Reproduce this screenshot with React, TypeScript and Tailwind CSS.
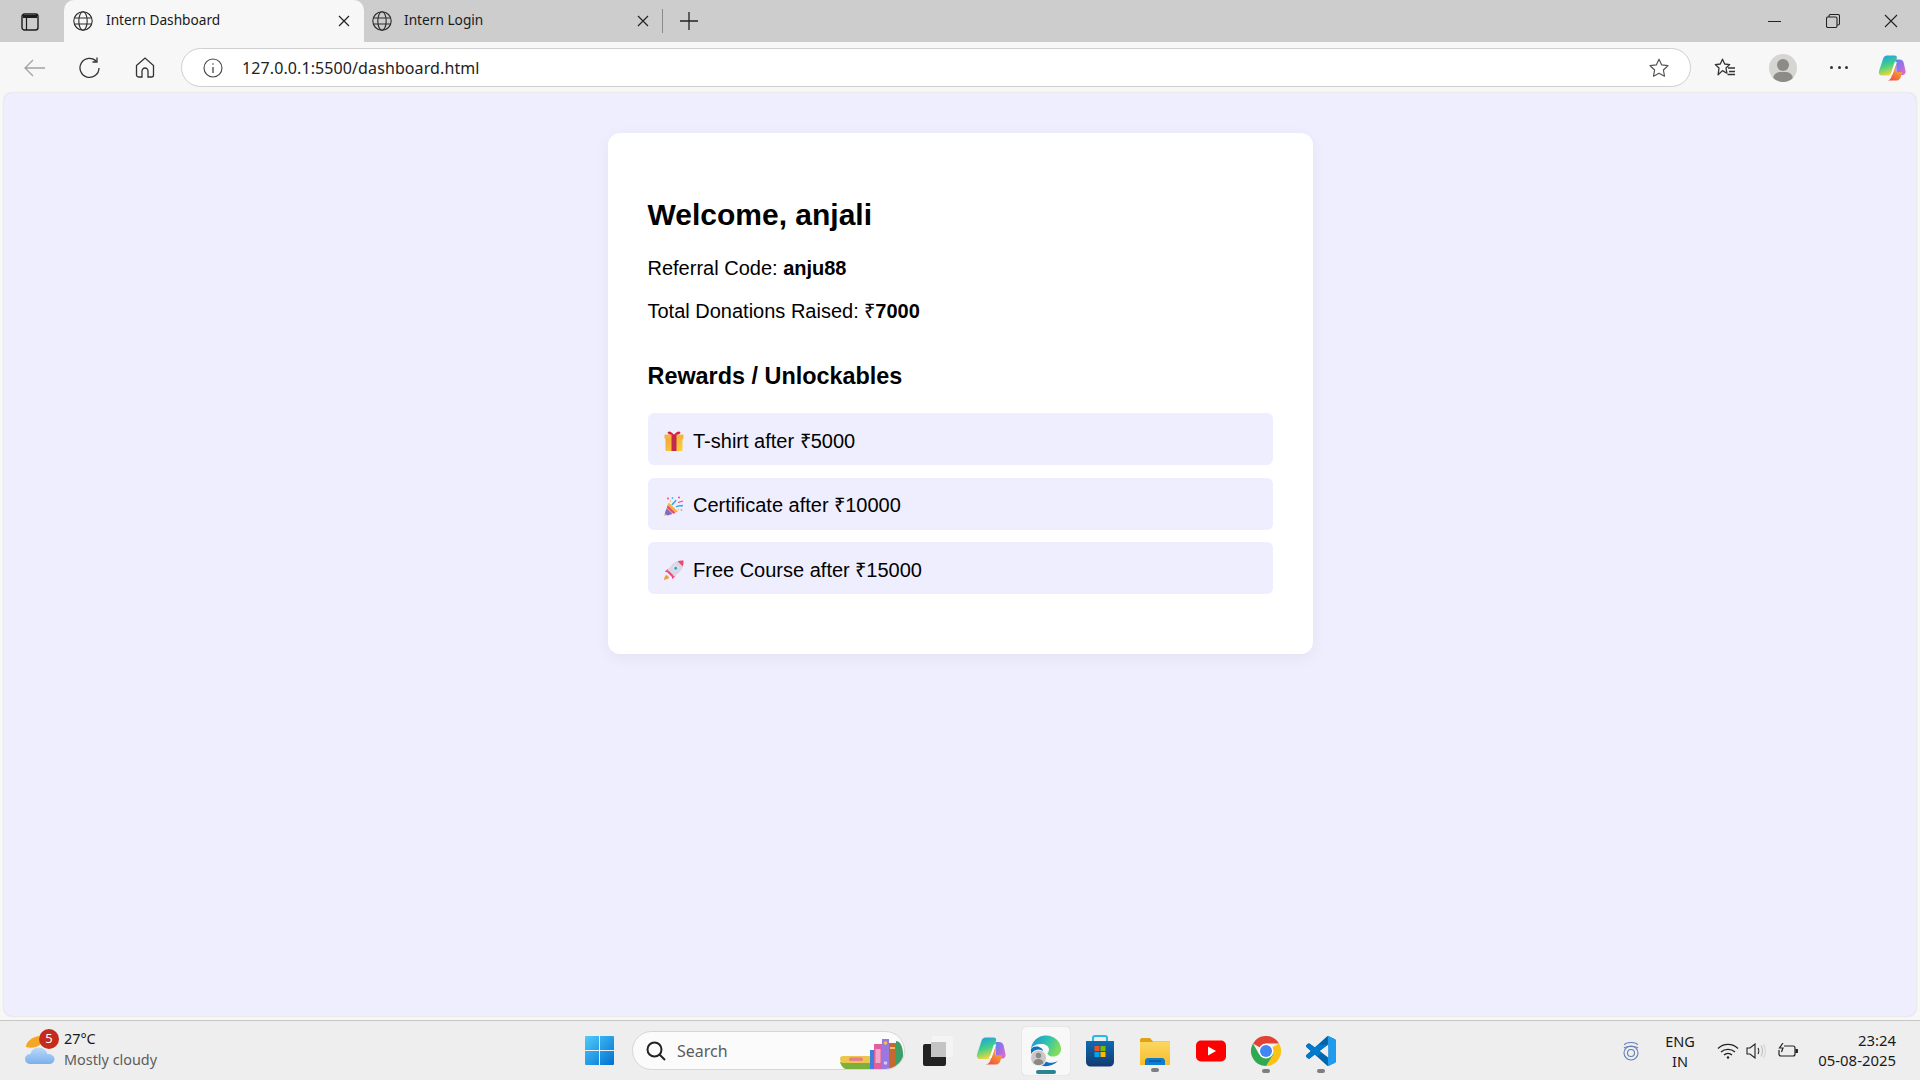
import React from "react";

const Globe = () => (
  <svg width="20" height="20" viewBox="0 0 20 20" fill="none" stroke="#2b2b2b" strokeWidth="1.1" className="shrink-0">
    <circle cx="10" cy="10" r="9.2" />
    <ellipse cx="10" cy="10" rx="4.2" ry="9.2" />
    <path d="M1.4 7h17.2M1.4 13h17.2" />
  </svg>
);

const Close = ({ s = 12 }: { s?: number }) => (
  <svg width={s} height={s} viewBox="0 0 12 12" fill="none" stroke="#222" strokeWidth="1.2" className="shrink-0">
    <path d="M1 1l10 10M11 1L1 11" />
  </svg>
);

const SidebarIcon = () => (
  <svg width="18" height="18" viewBox="0 0 18 18" fill="none" className="shrink-0">
    <rect x="1" y="1" width="16" height="16" rx="2.5" stroke="#1c1c1c" strokeWidth="1.4" />
    <path d="M2 2h14v3H2z" fill="#1c1c1c" />
    <path d="M5.5 5v12" stroke="#1c1c1c" strokeWidth="1.2" />
  </svg>
);

const Copilot = ({ s = 28, id }: { s?: number; id: string }) => (
  <svg width={s} height={s} viewBox="0 0 28 28" className="shrink-0">
    <defs>
      <linearGradient id={id + "a"} x1="0.2" y1="0" x2="0.5" y2="1">
        <stop offset="0" stopColor="#1f9fe8" />
        <stop offset="0.5" stopColor="#3fcf8a" />
        <stop offset="1" stopColor="#f5d83a" />
      </linearGradient>
      <linearGradient id={id + "b"} x1="0" y1="0" x2="1" y2="1">
        <stop offset="0" stopColor="#4f8cf0" />
        <stop offset="0.5" stopColor="#a96ce6" />
        <stop offset="1" stopColor="#e86fc0" />
      </linearGradient>
      <linearGradient id={id + "c"} x1="0.2" y1="1" x2="0.8" y2="0">
        <stop offset="0" stopColor="#ef4f3f" />
        <stop offset="0.6" stopColor="#f59a3a" />
        <stop offset="1" stopColor="#e86fc0" />
      </linearGradient>
    </defs>
    <path d="M9 1.500h7.500c2 0 2.800 1.300 2.200 3L14 19c-.5 1.500-1.500 2.500-3.200 2.500H4C1.500 21.500 .3 19.500 1 17L5 5c.7-2.300 2-3.500 4-3.500z" fill={`url(#${id}a)`} />
    <path d="M18 5.500h3.500c2.300 0 3.500 1 4.200 3.200l1.800 8c.5 2.300-.8 4.300-3 4.300h-6z" fill={`url(#${id}b)`} />
    <path d="M18.500 8 13.500 22.500C12.700 25 11.300 26.500 9 26.500h9.500c2.200 0 3.500-1.200 4.200-3.200L24.500 18H20c-2 0-2.500-1-2-2.500z" fill={`url(#${id}c)`} />
    <path d="M17.500 8 18.800 8 14.500 20.500H10.800C12.500 20.500 13 19.500 13.500 18L16 10c.3-1.200.8-2 1.500-2z" fill="#fff" />
  </svg>
);

const Gift = () => (
  <svg width="20" height="20" viewBox="0 0 20 20" className="shrink-0">
    <defs>
      <linearGradient id="gf" x1="0" y1="0" x2="1" y2="1">
        <stop offset="0" stopColor="#f3a33a" />
        <stop offset="1" stopColor="#fbd33b" />
      </linearGradient>
    </defs>
    <rect x="1.500" y="6" width="17" height="14" rx="1" fill="url(#gf)" />
    <rect x="0.500" y="3.500" width="19" height="4.500" rx="1" fill="#f6b53a" />
    <rect x="7.500" y="3.500" width="5" height="16.500" fill="#c4284b" />
    <path d="M10 4C8 .6 5 -.4 3.800 1 3 2.400 5 4 10 4zM10 4c2-3.400 5-4.400 6.200-3 .8 1.400-1.200 3-6.200 3z" fill="#d8203c" />
  </svg>
);

const Party = () => (
  <svg width="20" height="20" viewBox="0 0 20 20" className="shrink-0">
    <path d="M0 20 4.600 6.500 14 15.500z" fill="#f5b13c" />
    <path d="M0.800 17.600 2.600 12.400 8.400 18 3.500 19.500z" fill="#7a6bd0" />
    <path d="M3.600 9.500 11.500 17 9.600 17.800 2.900 11.500z" fill="#e0457b" />
    <path d="M8 9c1-2 3-2.500 4-5" stroke="#2ba6ee" strokeWidth="1.500" fill="none" />
    <path d="M12 11c2-1.500 4-1 7-1.500" stroke="#2ba6ee" strokeWidth="1.500" fill="none" />
    <circle cx="4" cy="2.500" r="1" fill="#f4468f" />
    <circle cx="15" cy="1.500" r="1" fill="#f4468f" />
    <circle cx="8.500" cy="2" r="0.900" fill="#35c0e8" />
    <circle cx="17.500" cy="14" r="0.900" fill="#f5a03c" />
    <path d="M14 6.500l5-1.500" stroke="#f4468f" strokeWidth="1.300" />
    <circle cx="14.500" cy="13.500" r="0.700" fill="#f0c53c" />
    <circle cx="6.500" cy="5" r="0.700" fill="#f5a03c" />
  </svg>
);

const Rocket = () => (
  <svg width="20" height="20" viewBox="0 0 20 20" className="shrink-0">
    <path d="M0 20c.3-2.500 1-4.200 2.400-5.200l2.800 2.800C4.200 19 2.500 19.700 0 20z" fill="#f79a34" />
    <path d="M4.500 8.500 0.800 11.500 4 12.500zM11.500 15.500 8.500 19.200 7.500 16z" fill="#f2447a" />
    <path d="M19.500 .5c.4 4.500-1.200 8.800-4.200 11.700l-5.500 4.300-6.300-6.300 4.300-5.500C10.700 1.700 15 .1 19.500 .5z" fill="#d9d7e0" />
    <path d="M19.500 .5c.2 2-.1 4-.8 5.900L13.600 1.300c1.900-.7 3.900-1 5.900-.8z" fill="#f2447a" />
    <circle cx="11.800" cy="8.200" r="2.200" fill="#4a9fe0" stroke="#f4f4f8" />
    <path d="M4.500 10.500 9.500 15.500 7.500 16.500 3.500 12.500z" fill="#f2447a" />
  </svg>
);

const Reward = ({ icon, text }: { icon: React.ReactNode; text: string }) => (
  <li className="flex h-[52px] items-center gap-[9.500px] rounded-[6px] bg-[#eeeeff] pl-4 pt-1 text-[20px] leading-[23px]">
    {icon}
    <span>{text}</span>
  </li>
);

const Books = () => (
  <svg width="64" height="32" viewBox="0 0 64 32" className="shrink-0">
    <path d="M0 24h30v8H10C4 32 1 28 0 24z" fill="#7bb03c" />
    <path d="M0 20c0-1 1-2 3-2h27v7H3c-2 0-3-2-3-5z" fill="#ecc64a" />
    <rect x="9" y="19.500" width="14" height="3.500" rx="1.500" fill="#e6808f" />
    <rect x="30" y="12" width="4" height="20" fill="#3f7fdc" />
    <rect x="34" y="6" width="8" height="26" fill="#e05fa0" />
    <rect x="35.500" y="11" width="5" height="14" fill="#f4a6c8" />
    <rect x="42" y="1" width="7" height="31" fill="#9a78e0" />
    <circle cx="45.500" cy="5" r="1.800" fill="#f0c53c" />
    <circle cx="45.500" cy="25" r="1.800" fill="#d8c8f8" />
    <rect x="49" y="5" width="7" height="27" fill="#c56a2c" />
    <rect x="50" y="9" width="5" height="2" fill="#f0c070" />
    <path d="M56 3c4 0 7 5 7 14s-2 13-7 15z" fill="#3d9e68" />
  </svg>
);

const EdgeLogo = () => (
  <svg width="32" height="32" viewBox="0 0 32 32" className="shrink-0">
    <defs>
      <linearGradient id="ed1" x1="0" y1="0" x2="1" y2="0.400">
        <stop offset="0" stopColor="#1d8fd8" />
        <stop offset="0.550" stopColor="#2ec2b2" />
        <stop offset="1" stopColor="#7fdc5e" />
      </linearGradient>
    </defs>
    <path d="M1 14C2 6 8 .5 16 .5c9 0 15 6.500 15 13.500 0 5-4 7.500-8 7.500-3 0-5.500-1.500-5.500-3 0-.8 1.500-1.500 1.500-4 0-3-3-5.500-7-5.500C6 9 2 11 1 14z" fill="url(#ed1)" />
    <path d="M1 14c-.6 7 3 13 9 16 6 2.500 13 1 18-4-4 2-9 2.500-12 .5-4-2.500-5-7.500-3-11-1-4-9-6-12-1.500z" fill="#0f6fc0" />
    <circle cx="8.500" cy="23" r="8" fill="#c9c8c5" stroke="#f7f7f7" strokeWidth="1" />
    <circle cx="8.500" cy="20.500" r="2.700" fill="#8b8985" />
    <path d="M3.500 28c.5-3 2.500-4 5-4s4.500 1 5 4c-1.500 1.600-3 2-5 2s-3.500-.4-5-2z" fill="#8b8985" />
  </svg>
);

const Store = () => (
  <svg width="30" height="32" viewBox="0 0 30 32" className="shrink-0">
    <defs>
      <linearGradient id="st" x1="0" y1="0" x2="0" y2="1">
        <stop offset="0" stopColor="#0f6cb0" />
        <stop offset="1" stopColor="#123a70" />
      </linearGradient>
    </defs>
    <path d="M8 6V3c0-1 .8-2 2-2h10c1.200 0 2 1 2 2v3" stroke="#29b6e8" strokeWidth="2" fill="none" />
    <path d="M1 6h28v21c0 2.500-2 4.500-4.500 4.500h-19C3 31.500 1 29.500 1 27z" fill="url(#st)" />
    <rect x="9.500" y="11" width="5" height="5" fill="#f25022" />
    <rect x="15.500" y="11" width="5" height="5" fill="#7fba00" />
    <rect x="9.500" y="17" width="5" height="5" fill="#00a4ef" />
    <rect x="15.500" y="17" width="5" height="5" fill="#ffb900" />
  </svg>
);

const Folder = () => (
  <svg width="30" height="28" viewBox="0 0 30 28" className="shrink-0">
    <defs>
      <linearGradient id="fo" x1="0" y1="0" x2="0" y2="1">
        <stop offset="0" stopColor="#fbd760" />
        <stop offset="1" stopColor="#f8bd2c" />
      </linearGradient>
    </defs>
    <path d="M0 3c0-1 .7-2 2-2h8l3 3.500h17V9H0z" fill="#e3a20d" />
    <rect x="0" y="5" width="30" height="23" fill="url(#fo)" />
    <path d="M5 28v-4c0-1.500 1-3 3-3h14c2 0 3 1.500 3 3v4z" fill="#0f7cd0" />
    <rect x="9" y="23.500" width="12" height="1.200" fill="#0a4f8e" />
  </svg>
);

const YouTube = () => (
  <svg width="30" height="22" viewBox="0 0 30 22" className="shrink-0">
    <rect width="30" height="21" y="0.500" rx="5" fill="#fe0000" />
    <path d="M12 6.500v9l8-4.500z" fill="#fff" />
  </svg>
);

const Chrome = () => (
  <svg width="30" height="30" viewBox="0 0 30 30" className="shrink-0">
    <path d="M15 15 2 7.500A15 15 0 0 1 28 7.500H15z" fill="#e34133" />
    <path d="M15 15 28 7.500A15 15 0 0 1 15 30l7-12z" fill="#fbc116" />
    <path d="M15 15l7.500 3L15 30A15 15 0 0 1 2 7.500L8 18z" fill="#31a852" />
    <circle cx="15" cy="15" r="7.500" fill="#fff" />
    <circle cx="15" cy="15" r="6" fill="#4285f4" />
  </svg>
);

const VSCode = () => (
  <svg width="30" height="30" viewBox="0 0 24 24" className="shrink-0">
    <defs>
      <clipPath id="vc">
        <path d="M23.150 2.587L18.210.21a1.494 1.494 0 0 0-1.705.29l-9.460 8.630-4.120-3.128a.999.999 0 0 0-1.276.057L.327 7.261A1 1 0 0 0 .326 8.740L3.899 12 .326 15.260a1 1 0 0 0 .001 1.479L1.650 17.940a.999.999 0 0 0 1.276.057l4.120-3.128 9.460 8.630a1.492 1.492 0 0 0 1.704.29l4.942-2.377A1.500 1.500 0 0 0 24 20.060V3.939a1.500 1.500 0 0 0-.85-1.352zm-5.146 14.861L10.826 12l7.178-5.448v10.896z" />
      </clipPath>
    </defs>
    <g clipPath="url(#vc)">
      <rect width="24" height="24" fill="#0065a9" />
      <path d="M0 7h18v3L4 20H0z" fill="#007acc" />
      <rect x="17.500" width="7" height="24" fill="#1f9cf0" />
    </g>
  </svg>
);

const Dot = ({ w = 8, c = "#7e7e7e" }: { w?: number; c?: string }) => (
  <span className="absolute bottom-[-7px] left-1/2 h-[4px] -translate-x-1/2 rounded-full" style={{ width: w, background: c }} />
);

export default function App() {
  return (
    <div className="flex h-[1080px] w-[1920px] flex-col overflow-hidden bg-[#f7f7f7] font-['Noto_Sans','Open_Sans',sans-serif] text-[#1a1a1a]">
      {/* tab strip */}
      <div className="flex h-[42px] shrink-0 items-center bg-[#cdcdcd]">
        <div className="flex w-[64px] justify-center pr-1 pt-[1px]"><SidebarIcon /></div>
        <div className="flex h-[42px] w-[300px] items-center rounded-t-[10px] bg-[#f7f7f7] pl-[9px] pr-[14px]">
          <Globe />
          <span className="ml-[13px] -mt-[1px] flex-1 text-[13.700px]">Intern Dashboard</span>
          <Close />
        </div>
        <div className="flex h-[42px] w-[298px] items-center pl-[8px] pr-[13px]">
          <Globe />
          <span className="ml-[12px] -mt-[1px] flex-1 text-[13.700px]">Intern Login</span>
          <Close />
        </div>
        <div className="h-[24px] w-px bg-[#8a8a8a]" />
        <svg width="18" height="18" viewBox="0 0 18 18" stroke="#222" strokeWidth="1.300" className="ml-[17px]"><path d="M9 0v18M0 9h18" /></svg>
        <div className="flex-1" />
        <div className="flex w-[174px] items-center justify-between pl-[22px] pr-[22px]">
          <div className="h-[1px] w-[13px] bg-[#222]" />
          <svg width="14" height="14" viewBox="0 0 14 14" fill="none" stroke="#222" strokeWidth="1.100"><rect x="0.500" y="3" width="10.500" height="10.500" rx="1.500" /><path d="M3 3V2c0-.8.7-1.500 1.500-1.500H12c.8 0 1.500.7 1.500 1.500v7.500c0 .8-.7 1.500-1.500 1.500h-1" /></svg>
          <svg width="14" height="14" viewBox="0 0 14 14" stroke="#222" strokeWidth="1.100"><path d="M1 1l12 12M13 1L1 13" /></svg>
        </div>
      </div>

      {/* toolbar */}
      <div className="flex h-[51px] shrink-0 items-center bg-[#f7f7f7]">
        <svg width="22" height="18" viewBox="0 0 22 18" fill="none" stroke="#a3a3a3" strokeWidth="1.300" className="ml-[24px]"><path d="M21 9H1M9 1 1 9l8 8" /></svg>
        <svg width="22" height="22" viewBox="0 0 22 22" fill="none" stroke="#333" strokeWidth="1.300" className="ml-[33px]"><path d="M17.500 4.500A9.500 9.500 0 1 0 20 11" /><path d="M18 0.500V5h-4.500" /></svg>
        <svg width="20" height="21" viewBox="0 0 20 21" fill="none" stroke="#333" strokeWidth="1.300" className="ml-[34px]"><path d="M1.500 8.500 10 1l8.500 7.500V18c0 1-.8 2-2 2H13v-6c0-1.500-1.300-3-3-3s-3 1.500-3 3v6H3.500c-1.200 0-2-1-2-2z" /></svg>
        <div className="ml-[26px] flex h-[39px] w-[1510px] items-center rounded-full border border-[#cfcfcf] bg-white pl-[21px] pr-[21px]">
          <svg width="20" height="20" viewBox="0 0 20 20" fill="none" stroke="#444" strokeWidth="1.100"><circle cx="10" cy="10" r="9" /><path d="M10 9v6" strokeWidth="1.300" /><circle cx="10" cy="6" r="0.800" fill="#444" stroke="none" /></svg>
          <span className="ml-[19px] flex-1 text-[16px] tracking-[0.1px] text-[#222]">127.0.0.1:5500/dashboard.html</span>
          <svg width="20" height="20" viewBox="0 0 20 20" fill="none" stroke="#555" strokeWidth="1.200"><path d="M10 1.200l2.700 5.700 6.200.8-4.500 4.300 1.100 6.200L10 15.200 4.500 18.200l1.100-6.200L1.100 7.700l6.200-.8z" strokeLinejoin="round" /></svg>
        </div>
        <svg width="21" height="20" viewBox="0 0 21 20" fill="none" stroke="#333" strokeWidth="1.300" className="ml-[23px]"><path d="M8.500 1.200l2.200 4.800 5 .6-3.700 3.400.9 5.200-4.400-2.600-4.400 4.200.9-6.800L1.300 6.600l5-.6z" strokeLinejoin="round" /><path d="M14 10h7M15 13.500h6M13.500 16.500h7.500" /></svg>
        <div className="relative ml-[34px] h-[28px] w-[28px] overflow-hidden rounded-full bg-[#d6d5d2]">
          <span className="absolute left-[8px] top-[5px] h-[12px] w-[12px] rounded-full bg-[#8d8b87]" />
          <span className="absolute left-[4px] top-[18px] h-[14px] w-[20px] rounded-full bg-[#8d8b87]" />
        </div>
        <div className="ml-[33px] flex w-[18px] justify-between">
          <span className="h-[3px] w-[3px] rounded-full bg-[#333]" />
          <span className="h-[3px] w-[3px] rounded-full bg-[#333]" />
          <span className="h-[3px] w-[3px] rounded-full bg-[#333]" />
        </div>
        <div className="ml-[30px]"><Copilot id="cp1" /></div>
      </div>

      {/* page */}
      <main className="mx-[4px] flex h-[923px] shrink-0 justify-center rounded-[8px] bg-[#eeeeff] font-['Liberation_Sans',Arial,sans-serif] text-black shadow-[0_0_2px_rgba(0,0,0,0.2)]">
        <section className="mt-[40px] h-[521px] w-[705px] rounded-[12px] bg-white px-[40px] pt-[65px] shadow-[0_4px_16px_rgba(0,0,0,0.05)]">
          <h1 className="text-[30px] font-bold leading-[34px]">Welcome, anjali</h1>
          <p className="mt-[25px] text-[20px] leading-[23px]">Referral Code: <b>anju88</b></p>
          <p className="mt-[20px] text-[20px] leading-[23px]">Total Donations Raised: ₹<b>7000</b></p>
          <h2 className="mt-[40px] text-[23.4px] font-bold leading-[27px]">Rewards / Unlockables</h2>
          <ul className="mt-[23px] flex flex-col gap-[12.5px]">
            <Reward icon={<Gift />} text="T-shirt after ₹5000" />
            <Reward icon={<Party />} text="Certificate after ₹10000" />
            <Reward icon={<Rocket />} text="Free Course after ₹15000" />
          </ul>
        </section>
      </main>

      {/* taskbar */}
      <footer className="mt-[4px] flex h-[60px] shrink-0 items-center border-t border-[#c6c6c6] bg-[#eeeeee]">
        <div className="relative ml-[25px] h-[36px] w-[30px] shrink-0">
          <svg width="30" height="34" viewBox="0 0 30 34" className="absolute left-0 top-0">
            <defs>
              <linearGradient id="cl" x1="0" y1="0" x2="0" y2="1"><stop offset="0" stopColor="#bcd9f8" /><stop offset="1" stopColor="#7bb0ee" /></linearGradient>
            </defs>
            <path d="M14 3C8 4 1 8 1 14c5 2 12 0 15-3z" fill="#f5a623" />
            <path d="M6 31c-3.500 0-6-2-6-5 0-3 2.500-5 5.500-5 1-4 4-6.500 8-6.500 4.500 0 8 3 9 6.500 4 0 7 2 7 5 0 3-2.500 5-5.500 5z" fill="url(#cl)" />
          </svg>
          <span className="absolute left-[14px] top-[-4px] flex h-[20px] w-[20px] items-center justify-center rounded-full bg-[#c42b1c] text-[13px] leading-none text-white">5</span>
        </div>
        <div className="ml-[9px] -mt-[2px] w-[120px] shrink-0 text-[14.400px] leading-[20.500px]">
          <div className="text-[#1a1a1a]">27°C</div>
          <div className="text-[#5c5c5c]">Mostly cloudy</div>
        </div>
        <svg width="29" height="29" viewBox="0 0 29 29" className="ml-[401px] shrink-0">
          <defs>
            <linearGradient id="wn" x1="0" y1="0" x2="1" y2="1"><stop offset="0" stopColor="#4fcbfb" /><stop offset="1" stopColor="#0070d0" /></linearGradient>
          </defs>
          <path d="M0 1a1 1 0 0 1 1-1h13v14H0zM15 0h13a1 1 0 0 1 1 1v13H15zM0 15h14v14H1a1 1 0 0 1-1-1zM15 15h14v13a1 1 0 0 1-1 1H15z" fill="url(#wn)" />
        </svg>
        <div className="ml-[18px] flex h-[39px] w-[273px] shrink-0 items-center overflow-hidden rounded-full border border-[#d6d6d6] bg-[#fbfbfb] pl-[13px]">
          <svg width="20" height="20" viewBox="0 0 20 20" fill="none" stroke="#222" strokeWidth="2" className="shrink-0"><circle cx="8.500" cy="8.500" r="7" /><path d="M13.500 13.500 19 19" /></svg>
          <span className="ml-[11px] flex-1 text-[16px] text-[#5c5c5c]">Search</span>
          <div className="mt-[6px] self-center"><Books /></div>
        </div>
        <svg width="30" height="30" viewBox="0 0 30 30" className="ml-[18px] shrink-0">
          <rect x="9" y="0" width="21" height="21" rx="2" fill="#f4f4f4" />
          <rect x="8" y="6" width="15" height="15" rx="1" fill="#c4c4c4" />
          <path d="M2 8h6v13h15v7a2 2 0 0 1-2 2H2a2 2 0 0 1-2-2V10a2 2 0 0 1 2-2z" fill="#222" />
        </svg>
        <div className="ml-[23px]"><Copilot s={30} id="cp2" /></div>
        <div className="relative ml-[16px] flex h-[48px] w-[48px] shrink-0 items-center justify-center rounded-[4px] bg-[#f8f8f8] shadow-[0_0_1px_rgba(0,0,0,0.25)]">
          <EdgeLogo />
          <span className="absolute bottom-[1px] left-1/2 h-[4px] w-[20px] -translate-x-1/2 rounded-full bg-[#2a8491]" />
        </div>
        <div className="ml-[15px]"><Store /></div>
        <div className="relative ml-[25px]"><Folder /><Dot /></div>
        <div className="ml-[26px]"><YouTube /></div>
        <div className="relative ml-[25px]"><Chrome /><Dot /></div>
        <div className="relative ml-[25px]"><VSCode /><Dot /></div>
        <div className="flex-1" />
        <svg width="16" height="20" viewBox="0 0 16 20" fill="none" stroke="#5f7fb5" strokeWidth="1.100" className="shrink-0"><path d="M1.500 4c1-3.300 12-3.300 13 0" /><circle cx="8" cy="12" r="7" /><circle cx="8" cy="12" r="3.500" /><path d="M1 7c2-2 12-2 14 0" /></svg>
        <div className="ml-[25px] w-[32px] text-center text-[14.500px] leading-[20px]"><div>ENG</div><div>IN</div></div>
        <svg width="22" height="16" viewBox="0 0 22 16" fill="none" stroke="#222" strokeWidth="1.300" className="ml-[21px]"><path d="M1 5.500c5.500-5.500 14.500-5.500 20 0M4 9c3.800-3.500 10.200-3.500 14 0M7 12c2.300-2 5.700-2 8 0" /><circle cx="11" cy="14.500" r="1.200" fill="#222" stroke="none" /></svg>
        <svg width="20" height="16" viewBox="0 0 20 16" fill="none" stroke="#222" strokeWidth="1.100" className="ml-[7px]"><path d="M1 5h3l5-4v14l-5-4H1z" /><path d="M12 5c1 1.500 1 4.500 0 6" /><path d="M15 2.500c2 3 2 8 0 11" stroke="#bdbdbd" /><path d="M17.500 1c2.500 4 2.500 10 0 14" stroke="#d4d4d4" /></svg>
        <svg width="20" height="16" viewBox="0 0 20 16" fill="none" stroke="#222" strokeWidth="1.200" className="ml-[12px]"><path d="M6 3h9c1.500 0 2 1 2 2v6c0 1-.5 2-2 2H3c-1.500 0-2-1-2-2V7" /><path d="M17.500 6.500h1.800v3h-1.800" fill="#222" /><path d="M5 0 1.500 5H5L3.500 9" /></svg>
        <div className="ml-[13px] mr-[24px] -mt-[2px] w-[85px] text-right text-[14.900px] leading-[20px]"><div>23:24</div><div className="whitespace-nowrap">05-08-2025</div></div>
      </footer>
    </div>
  );
}
